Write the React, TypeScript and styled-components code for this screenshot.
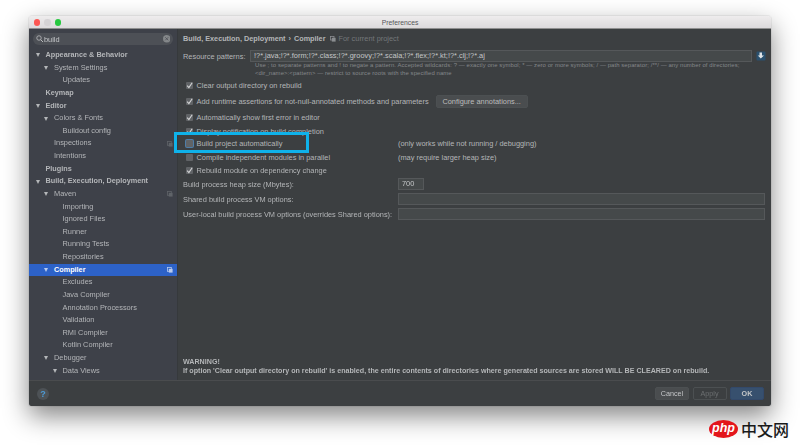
import React from "react";
import styled, { createGlobalStyle } from "styled-components";

const Global = createGlobalStyle`
  html, body { margin: 0; padding: 0; background: #fff; overflow: hidden; }
  body { width: 800px; height: 448px; font-family: "Liberation Sans", Arial, sans-serif; }
`;
const Page = styled.div`
  position: relative;
  width: 800px;
  height: 448px;
  padding: 16px 29px 0 29px;
  box-sizing: border-box;
`;
const Window = styled.div`
  position: relative;
  width: 742px;
  height: 390px;
  display: flex;
  flex-direction: column;
  border-radius: 3px 3px 2px 2px;
  overflow: hidden;
  box-shadow: 0 0 1px rgba(0,0,0,.5);
  filter: blur(0.42px);
`;
const Shadow = styled.div`
  position: absolute;
  left: 29px;
  top: 16px;
  width: 742px;
  height: 390px;
  box-shadow: 0 10px 24px rgba(0,0,0,.48);
`;
const TitleBar = styled.div`
  flex: 0 0 12px;
  position: relative;
  display: flex;
  align-items: center;
  justify-content: center;
  background: linear-gradient(#eeeced, #dcdadc);
  border-bottom: 1px solid #8f8f8f;
  font-size: 6.8px;
  color: #55565a;
`;
const Lights = styled.div`
  position: absolute;
  left: 4.5px;
  top: 3px;
  display: flex;
  gap: 4px;
`;
const Light = styled.span<{ $c: string }>`
  width: 6.5px;
  height: 6.5px;
  border-radius: 50%;
  background: ${p => p.$c};
`;
const Body = styled.div`
  flex: 1;
  min-height: 0;
  display: flex;
`;
const Sidebar = styled.div`
  width: 148px;
  flex: none;
  background: #3e4149;
  border-right: 1px solid #36393c;
  display: flex;
  flex-direction: column;
  overflow: hidden;
`;
const SearchWrap = styled.div`
  padding: 4px;
  flex: none;
`;
const Search = styled.div`
  height: 12px;
  border-radius: 6px;
  background: #4d5056;
  display: flex;
  align-items: center;
  padding: 0 3px;
  gap: 0.5px;
  font-size: 7.4px;
  color: #c4c6c9;
`;
const SearchText = styled.span`
  flex: 1;
`;
const Tree = styled.div`
  display: flex;
  flex-direction: column;
`;
const Row = styled.div<{ $lvl: number; $sel?: boolean; $bold?: boolean }>`
  position: relative;
  flex: none;
  height: 12.63px;
  line-height: 12.63px;
  padding-left: ${p => 16.5 + p.$lvl * 8.5}px;
  font-size: ${p => (p.$bold || p.$sel ? 7.27 : 7.4)}px;
  white-space: nowrap;
  color: ${p => (p.$sel ? "#fff" : "#b4b6b9")};
  font-weight: ${p => (p.$bold || p.$sel ? 700 : 400)};
  background: ${p => (p.$sel ? "#2d62c8" : "transparent")};
`;
const Arrow = styled.span<{ $lvl: number; $sel?: boolean }>`
  position: absolute;
  top: 4.4px;
  left: ${p => 6.8 + p.$lvl * 8.5}px;
  width: 0;
  height: 0;
  border-left: 2.4px solid transparent;
  border-right: 2.4px solid transparent;
  border-top: 4px solid ${p => (p.$sel ? "#b9cbee" : "#b4b6b9")};
`;
const CopyMark = styled.svg`
  position: absolute;
  right: 4.5px;
  top: 3.5px;
`;
const Main = styled.div`
  flex: 1;
  min-width: 0;
  background: #3c3f41;
  padding: 0 5px;
  display: flex;
  flex-direction: column;
  color: #b4b6b8;
  font-size: 7.4px;
`;
const Crumbs = styled.div`
  margin-top: 4px;
  height: 12px;
  line-height: 12px;
  display: flex;
  align-items: center;
  gap: 3px;
  white-space: nowrap;
  font-weight: 700;
  font-size: 7.27px;
`;
const Project = styled.span`
  font-weight: 400;
  font-size: 7.4px;
  color: #74777a;
  display: flex;
  align-items: center;
  gap: 2px;
  margin-left: 2px;
`;
const Patterns = styled.div`
  margin-top: 5px;
  display: flex;
  align-items: center;
  gap: 4px;
  height: 12px;
`;
const PatternLabel = styled.span`
  width: 63px;
  flex: none;
  white-space: nowrap;
`;
const PatternInput = styled.div`
  width: 502px;
  height: 11.5px;
  line-height: 10px;
  box-sizing: border-box;
  padding-left: 3px;
  flex: none;
  background: #45494a;
  border: 1px solid #55585a;
  color: #c4c6c8;
  font-size: 7.4px;
  white-space: nowrap;
`;
const Hint = styled.div`
  margin: 0.2px 0 0 72px;
  font-size: 5.95px;
  line-height: 7.6px;
  color: #85888b;
  letter-spacing: 0.015em;
  white-space: nowrap;
`;
const Checks = styled.div`
  display: flex;
  flex-direction: column;
`;
const CheckRow = styled.div<{ $h: number }>`
  height: ${p => p.$h}px;
  display: flex;
  align-items: center;
  padding-left: 3px;
  white-space: nowrap;
`;
const Box = styled.span<{ $focus?: boolean }>`
  width: 7px;
  height: 7px;
  flex: none;
  margin-right: 3.5px;
  border-radius: 1px;
  background: #606366;
  ${p => p.$focus && "box-shadow: 0 0 0 1px #4e7ea8;"}
  display: flex;
  align-items: center;
  justify-content: center;
`;
const CheckText = styled.span<{ $w?: number }>`
  flex: none;
  ${p => p.$w && `width: ${p.$w}px;`}
`;
const Configure = styled.span`
  margin-left: 7px;
  height: 13px;
  line-height: 11px;
  box-sizing: border-box;
  width: 92px;
  text-align: center;
  border: 1px solid #4c5052;
  border-radius: 2px;
  background: #4a4d4f;
  color: #bbb;
`;
const FieldRow = styled.div`
  display: flex;
  align-items: center;
  height: 15px;
  white-space: nowrap;
`;
const FieldLabel = styled.span`
  width: 215px;
  flex: none;
`;
const Field = styled.div<{ $w: number }>`
  width: ${p => p.$w}px;
  height: 12px;
  line-height: 10px;
  box-sizing: border-box;
  padding-left: 3px;
  background: #45494a;
  border: 1px solid #55585a;
  color: #c4c6c8;
`;
const Warning = styled.div`
  margin-top: auto;
  margin-bottom: 4.5px;
  font-weight: 700;
  font-size: 7.13px;
  line-height: 8.8px;
  white-space: nowrap;
  color: #b4b6b8;
`;
const Footer = styled.div`
  flex: 0 0 26px;
  box-sizing: border-box;
  background: #3c3f41;
  border-top: 1px solid #4a4c4e;
  display: flex;
  align-items: center;
  padding: 0 7px 0 8px;
  gap: 3.5px;
`;
const Help = styled.div`
  width: 12px;
  height: 12px;
  border-radius: 50%;
  background: #4d5256;
  color: #4d9bd6;
  font-size: 9px;
  font-weight: 700;
  line-height: 12px;
  text-align: center;
  margin-right: auto;
`;
const Btn = styled.div<{ $kind?: "primary" | "disabled" }>`
  width: 34px;
  height: 13px;
  box-sizing: border-box;
  line-height: 11px;
  text-align: center;
  font-size: 7.2px;
  border-radius: 2px;
  color: ${p => (p.$kind === "disabled" ? "#6c6f71" : "#c4c6c8")};
  font-weight: ${p => (p.$kind === "primary" ? 700 : 400)};
  background: ${p => (p.$kind === "primary" ? "#37506e" : p.$kind === "disabled" ? "#3c3f41" : "#4a4d4f")};
  border: 1px solid ${p => (p.$kind === "primary" ? "#33496a" : "#4c5052")};
`;
const Highlight = styled.div`
  position: absolute;
  left: 174px;
  top: 131.5px;
  width: 135px;
  height: 21.5px;
  box-sizing: border-box;
  border: 3px solid #0fb2ea;
  filter: blur(0.3px);
`;
const Watermark = styled.div`
  position: absolute;
  left: 709px;
  top: 419.5px;
  display: flex;
  align-items: center;
  gap: 3px;
`;
const Php = styled.div`
  width: 29px;
  height: 18px;
  border-radius: 50%;
  background: #e3151b;
  color: #fff;
  font: italic 700 12.5px/17px "Liberation Sans", Arial, sans-serif;
  text-align: center;
`;
const Cn = styled.div`
  font: 500 16px/18px "Noto Sans CJK SC", sans-serif;
  color: #1a1a1a;
`;

type Item = { t: string; l: number; arrow?: boolean; bold?: boolean; sel?: boolean; copy?: boolean };
const items: Item[] = [
  { t: "Appearance & Behavior", l: 0, arrow: true, bold: true },
  { t: "System Settings", l: 1, arrow: true },
  { t: "Updates", l: 2 },
  { t: "Keymap", l: 0, bold: true },
  { t: "Editor", l: 0, arrow: true, bold: true },
  { t: "Colors & Fonts", l: 1, arrow: true },
  { t: "Buildout config", l: 2 },
  { t: "Inspections", l: 1, copy: true },
  { t: "Intentions", l: 1 },
  { t: "Plugins", l: 0, bold: true },
  { t: "Build, Execution, Deployment", l: 0, arrow: true, bold: true },
  { t: "Maven", l: 1, arrow: true, copy: true },
  { t: "Importing", l: 2 },
  { t: "Ignored Files", l: 2 },
  { t: "Runner", l: 2 },
  { t: "Running Tests", l: 2 },
  { t: "Repositories", l: 2 },
  { t: "Compiler", l: 1, arrow: true, sel: true, copy: true },
  { t: "Excludes", l: 2 },
  { t: "Java Compiler", l: 2 },
  { t: "Annotation Processors", l: 2 },
  { t: "Validation", l: 2 },
  { t: "RMI Compiler", l: 2 },
  { t: "Kotlin Compiler", l: 2 },
  { t: "Debugger", l: 1, arrow: true },
  { t: "Data Views", l: 2, arrow: true },
];

const Check = () => (
  <svg width="7" height="7" viewBox="0 0 7 7">
    <path d="M1.2 3.6 L2.9 5.6 L6.2 0.8" fill="none" stroke="#d4d5d6" strokeWidth="1.1" />
  </svg>
);
const Copy = ({ c }: { c: string }) => (
  <CopyMark width="6" height="6" viewBox="0 0 6 6">
    <rect x="0.5" y="0.5" width="3.8" height="3.8" fill="none" stroke={c} strokeWidth="0.8" />
    <rect x="1.8" y="1.8" width="3.8" height="3.8" fill={c} />
  </CopyMark>
);

const checks: { t: string; h: number; on: boolean; focus?: boolean; side?: string; btn?: boolean }[] = [
  { t: "Clear output directory on rebuild", h: 16, on: true },
  { t: "Add runtime assertions for not-null-annotated methods and parameters", h: 16, on: true, btn: true },
  { t: "Automatically show first error in editor", h: 16, on: true },
  { t: "Display notification on build completion", h: 11.9, on: true },
  { t: "Build project automatically", h: 13.2, on: false, focus: true, side: "(only works while not running / debugging)" },
  { t: "Compile independent modules in parallel", h: 13.2, on: false, side: "(may require larger heap size)" },
  { t: "Rebuild module on dependency change", h: 13.2, on: true },
];

export default function App() {
  return (
    <Page>
      <Global />
      <Shadow />
      <Window>
        <TitleBar>
          <Lights>
            <Light $c="#fc5753" />
            <Light $c="#d5d3d5" />
            <Light $c="#27c840" />
          </Lights>
          Preferences
        </TitleBar>
        <Body>
          <Sidebar>
            <SearchWrap>
              <Search>
                <svg width="7.5" height="7.5" viewBox="0 0 8 8">
                  <circle cx="3.2" cy="3.2" r="2.4" fill="none" stroke="#c0c2c4" strokeWidth="0.8" />
                  <path d="M5 5 L7.5 7.5" stroke="#c0c2c4" strokeWidth="1" />
                </svg>
                <SearchText>build</SearchText>
                <svg width="7.5" height="7.5" viewBox="0 0 8 8">
                  <circle cx="4" cy="4" r="4" fill="#84878a" />
                  <path d="M2.4 2.4 L5.6 5.6 M5.6 2.4 L2.4 5.6" stroke="#4f5258" strokeWidth="0.9" />
                </svg>
              </Search>
            </SearchWrap>
            <Tree>
              {items.map(i => (
                <Row key={i.t} $lvl={i.l} $sel={i.sel} $bold={i.bold}>
                  {i.arrow && <Arrow $lvl={i.l} $sel={i.sel} />}
                  {i.t}
                  {i.copy && <Copy c={i.sel ? "#b9cbee" : "#5f6368"} />}
                </Row>
              ))}
            </Tree>
          </Sidebar>
          <Main>
            <Crumbs>
              <span>Build, Execution, Deployment</span>
              <span>›</span>
              <span>Compiler</span>
              <Project>
                <svg width="6" height="6" viewBox="0 0 6 6">
                  <rect x="0.4" y="0.4" width="3.6" height="3.6" fill="none" stroke="#8a8d90" strokeWidth="0.8" />
                  <rect x="1.8" y="1.8" width="3.8" height="3.8" fill="#8a8d90" />
                </svg>
                For current project
              </Project>
            </Crumbs>
            <Patterns>
              <PatternLabel>Resource patterns:</PatternLabel>
              <PatternInput>!?*.java;!?*.form;!?*.class;!?*.groovy;!?*.scala;!?*.flex;!?*.kt;!?*.clj;!?*.aj</PatternInput>
              <svg width="10" height="10" viewBox="0 0 10 10">
                <rect x="0.5" y="0.5" width="9" height="9" rx="1" fill="#2a506e" />
                <path d="M3.5 1.5 H6 V4.5 H8 L4.8 7.5 L1.8 4.5 H3.5 Z" fill="#dfe3e6" />
              </svg>
            </Patterns>
            <Hint>
              Use ; to separate patterns and ! to negate a pattern. Accepted wildcards: ? — exactly one symbol; * — zero or more symbols; / — path separator; /**/ — any number of directories;
              <br />
              {"<dir_name>:<pattern> — restrict to source roots with the specified name"}
            </Hint>
            <Checks>
              {checks.map(c => (
                <CheckRow key={c.t} $h={c.h}>
                  <Box $focus={c.focus}>{c.on && <Check />}</Box>
                  <CheckText $w={c.side ? 201.5 : undefined}>{c.t}</CheckText>
                  {c.btn && <Configure>Configure annotations...</Configure>}
                  {c.side && <span>{c.side}</span>}
                </CheckRow>
              ))}
            </Checks>
            <FieldRow>
              <FieldLabel>Build process heap size (Mbytes):</FieldLabel>
              <Field $w={26}>700</Field>
            </FieldRow>
            <FieldRow>
              <FieldLabel>Shared build process VM options:</FieldLabel>
              <Field $w={367} />
            </FieldRow>
            <FieldRow>
              <FieldLabel>User-local build process VM options (overrides Shared options):</FieldLabel>
              <Field $w={367} />
            </FieldRow>
            <Warning>
              WARNING!
              <br />
              If option 'Clear output directory on rebuild' is enabled, the entire contents of directories where generated sources are stored WILL BE CLEARED on rebuild.
            </Warning>
          </Main>
        </Body>
        <Footer>
          <Help>?</Help>
          <Btn>Cancel</Btn>
          <Btn $kind="disabled">Apply</Btn>
          <Btn $kind="primary">OK</Btn>
        </Footer>
      </Window>
      <Highlight />
      <Watermark>
        <Php>php</Php>
        <Cn>中文网</Cn>
      </Watermark>
    </Page>
  );
}
